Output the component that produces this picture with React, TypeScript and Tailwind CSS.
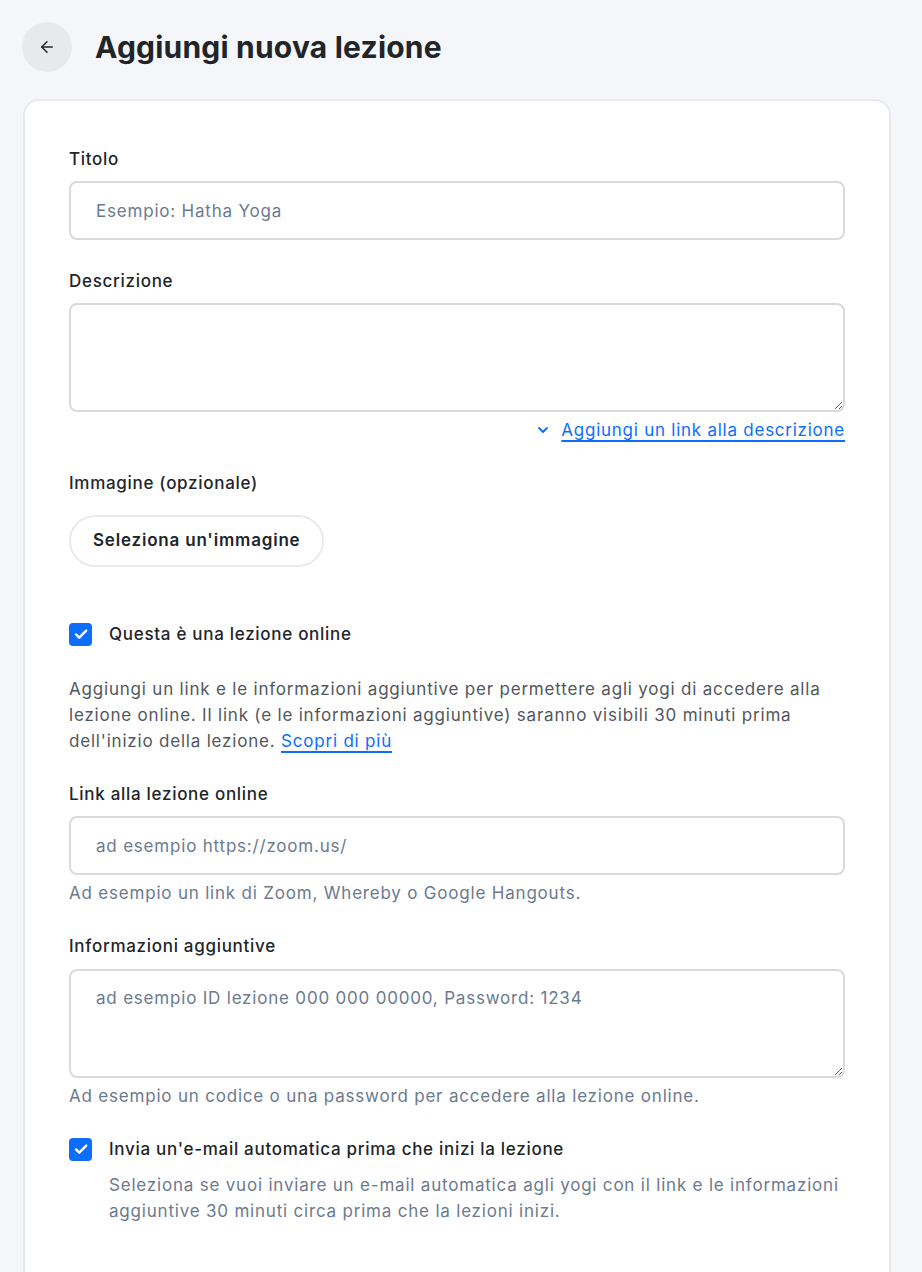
import React from "react";

function CheckBox() {
  return (
    <span className="flex h-[23px] w-[23px] shrink-0 items-center justify-center rounded-[4px] bg-[#0d6efd]">
      <svg width="16" height="16" viewBox="0 0 16 16" fill="none">
        <path d="M3 8.4l3.3 3.3L13.2 4.6" stroke="#fff" strokeWidth="2.4" strokeLinecap="round" strokeLinejoin="round" />
      </svg>
    </span>
  );
}

const inputCls =
  "block w-full rounded-[8px] border-2 border-[#dadada] bg-white px-[25px] text-[17px] tracking-[0.8px] text-[#212529] placeholder:text-[#6c7a8e] outline-none";

const labelCls = "block text-[17px] font-medium leading-[24px] tracking-[0.7px]";

export default function App() {
  return (
    <div
      className="min-h-[1272px] bg-[#f5f6fa] text-[#212529]"
      style={{ fontFamily: "Inter, 'Noto Sans', sans-serif" }}
    >
      <div className="flex items-center gap-[23px] px-[22px] pt-[22px]">
        <button className="flex h-[50px] w-[50px] items-center justify-center rounded-full bg-[#e8e9ed]">
          <svg width="18" height="18" viewBox="0 0 24 24" fill="none" stroke="#212529" strokeWidth="2" strokeLinecap="round" strokeLinejoin="round">
            <path d="M19 12H5" />
            <path d="M12 19l-7-7 7-7" />
          </svg>
        </button>
        <h1 className="text-[30px] font-bold leading-[50px] tracking-[0.2px] text-[#212529]">Aggiungi nuova lezione</h1>
      </div>

      <div className="ml-[23px] mr-[31px] mt-[27px] rounded-t-[16px] border-2 border-b-0 border-[#e8e9ee] bg-white px-[44px] pb-[80px] pt-[46px]">
        <label className={labelCls}>Titolo</label>
        <input className={`${inputCls} mt-[10px] h-[59px]`} placeholder="Esempio: Hatha Yoga" />

        <label className={`${labelCls} mt-[29px]`}>Descrizione</label>
        <textarea className={`${inputCls} mt-[10px] h-[109px] resize-y py-[16px]`} />
        <div className="mt-[6px] flex justify-end">
          <a className="flex items-center gap-[10px] text-[17px] leading-[24px] tracking-[0.75px] text-[#0d6efd]" href="#">
            <svg width="16" height="16" viewBox="0 0 24 24" fill="none" stroke="#0d6efd" strokeWidth="2.8" strokeLinecap="round" strokeLinejoin="round">
              <path d="M6 9l6 6 6-6" />
            </svg>
            <span className="underline decoration-2 underline-offset-[4px]">Aggiungi un link alla descrizione</span>
          </a>
        </div>

        <label className={`${labelCls} mt-[29px]`}>Immagine (opzionale)</label>
        <button className="mt-[20px] h-[52px] rounded-full border-2 border-[#e9eaee] bg-white px-[22px] text-[17px] font-semibold tracking-[0.8px] text-[#212529]">
          Seleziona un'immagine
        </button>

        <div className="mt-[55px] flex items-center gap-[17px]">
          <CheckBox />
          <span className="text-[17px] font-medium leading-[24px] tracking-[0.7px]">Questa è una lezione online</span>
        </div>

        <p className="mt-[30px] text-[17px] leading-[26px] tracking-[0.8px] text-[#52575e]">
          Aggiungi un link e le informazioni aggiuntive per permettere agli yogi di accedere alla lezione online. Il link (e le
          informazioni aggiuntive) saranno visibili 30 minuti prima dell'inizio della lezione.{" "}
          <a href="#" className="text-[#0d6efd] underline decoration-2 underline-offset-[4px]">Scopri di più</a>
        </p>

        <label className={`${labelCls} mt-[28px]`}>Link alla lezione online</label>
        <input className={`${inputCls} mt-[10px] h-[59px]`} placeholder="ad esempio https://zoom.us/" />
        <p className="mt-[6px] text-[17px] leading-[24px] tracking-[0.8px] text-[#6c7a8e]">
          Ad esempio un link di Zoom, Whereby o Google Hangouts.
        </p>

        <label className={`${labelCls} mt-[29px]`}>Informazioni aggiuntive</label>
        <textarea
          className={`${inputCls} mt-[11px] h-[109px] resize-y py-[15px]`}
          placeholder="ad esempio ID lezione 000 000 00000, Password: 1234"
        />
        <p className="mt-[6px] text-[17px] leading-[24px] tracking-[0.8px] text-[#6c7a8e]">
          Ad esempio un codice o una password per accedere alla lezione online.
        </p>

        <div className="mt-[29px] flex items-center gap-[17px]">
          <CheckBox />
          <span className="text-[17px] font-medium leading-[24px] tracking-[0.7px]">
            Invia un'e-mail automatica prima che inizi la lezione
          </span>
        </div>
        <p className="ml-[40px] mt-[11px] text-[17px] leading-[26px] tracking-[0.8px] text-[#6c7a8e]">
          Seleziona se vuoi inviare un e-mail automatica agli yogi con il link e le informazioni aggiuntive 30 minuti circa prima
          che la lezioni inizi.
        </p>
      </div>
    </div>
  );
}
